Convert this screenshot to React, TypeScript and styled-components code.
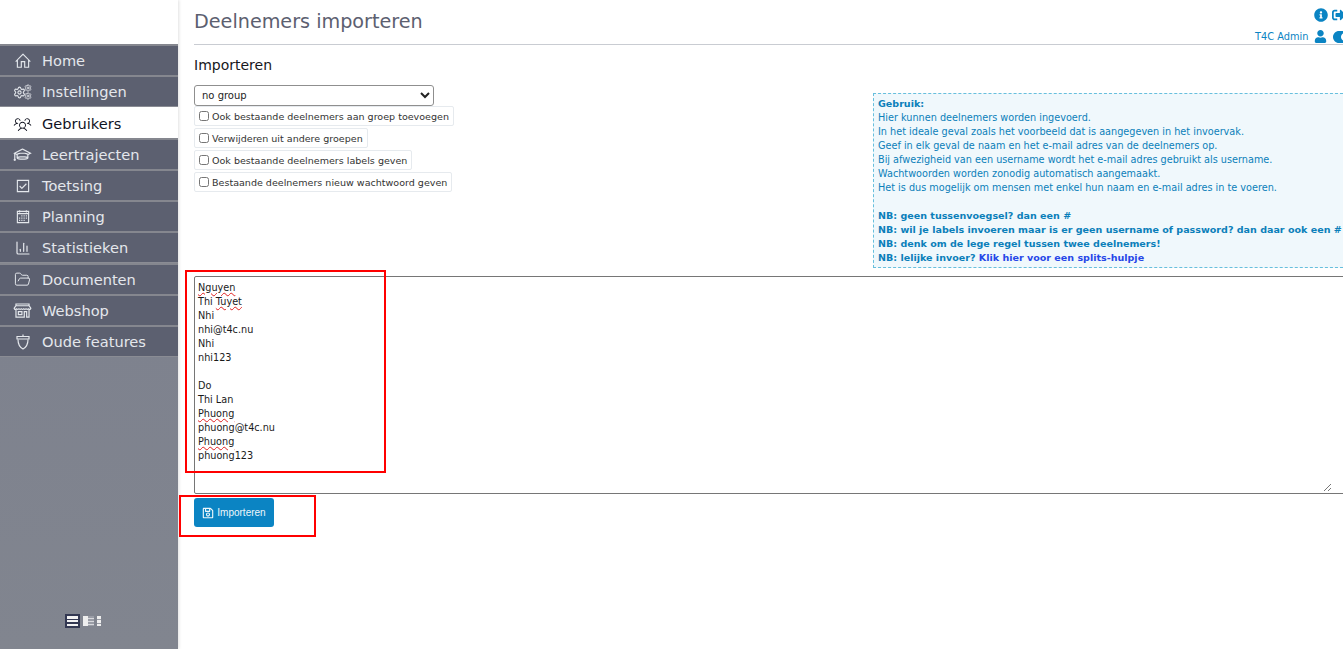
import React from "react";
import styled, { createGlobalStyle } from "styled-components";
import { FaInfoCircle, FaSignOutAlt, FaUser, FaToggleOn, FaRegSave } from "react-icons/fa";
import { LiaHomeSolid, LiaGraduationCapSolid, LiaCheckSquare, LiaCalendarAlt, LiaStoreAltSolid } from "react-icons/lia";
import { PiUsersThreeLight } from "react-icons/pi";
import { Settings, FolderOpen, ChartColumn } from "lucide-react";

const Global = createGlobalStyle`
  html, body { margin: 0; padding: 0; height: 100%; overflow: hidden; background: #fff; }
  body { font-family: "DejaVu Sans", Verdana, sans-serif; }
  #root { height: 100%; }
`;

const Page = styled.div`
  display: flex;
  width: 1343px;
  height: 649px;
  overflow: hidden;
`;

const Sidebar = styled.aside`
  width: 178px;
  flex: none;
  display: flex;
  flex-direction: column;
  padding-top: 44px;
  background: #fff;
  box-shadow: 1px 0 3px rgba(0,0,0,.12);
`;

const Menu = styled.nav`
  flex: 1;
  display: flex;
  flex-direction: column;
  background: linear-gradient(#7b7f8d, #81858f);
  position: relative;
`;

const Group = styled.div`
  border-bottom: 1px solid #8a8c94;
`;

const Item = styled.div<{ $active?: boolean }>`
  height: 31px;
  box-sizing: border-box;
  display: flex;
  align-items: center;
  border-top: 2px solid ${p => (p.$active ? "#fff" : "#85878f")};
  background: ${p => (p.$active ? "#fff" : "#5c6070")};
  color: ${p => (p.$active ? "#10131f" : "#e4e7ec")};
  font-size: 14.6px;
  padding-left: 13px;
  gap: 10px;
`;

const IconSlot = styled.span`
  width: 19px;
  height: 19px;
  display: flex;
  align-items: center;
  justify-content: center;
  flex: none;
`;

const ViewSwitch = styled.div`
  position: absolute;
  left: 65px;
  top: 570px;
  display: flex;
  align-items: center;
  gap: 3px;
`;

const Main = styled.main`
  flex: 1;
  min-width: 0;
  display: flex;
  flex-direction: column;
  padding-left: 16px;
`;

const Header = styled.header`
  height: 44px;
  border-bottom: 1px solid #c9ccd2;
  display: flex;
  justify-content: space-between;
`;

const Title = styled.h1`
  margin: 8px 0 0;
  font-size: 19.2px;
  font-weight: 400;
  line-height: 27px;
  color: #5c6070;
`;

const UserBox = styled.div`
  width: 100px;
  display: flex;
  flex-direction: column;
  padding-top: 8px;
  margin-right: -12px;
  color: #0b84c3;
`;

const IconRow = styled.div`
  display: flex;
  align-items: center;
  height: 15px;
  gap: 4px;
  padding-left: 59px;
`;

const UserRow = styled.div`
  display: flex;
  align-items: center;
  margin-top: 7px;
  font-size: 9.8px;
  white-space: nowrap;
  height: 15px;
  gap: 6px;
`;

const Heading = styled.h2`
  margin: 11px 0 0;
  font-size: 14px;
  line-height: 18px;
  font-weight: 400;
  color: #17181c;
`;

const FormTop = styled.div`
  display: flex;
  justify-content: space-between;
  align-items: flex-start;
  margin-top: 2px;
`;

const Options = styled.div`
  display: flex;
  flex-direction: column;
  align-items: flex-start;
  padding-top: 9px;
`;

const Select = styled.select`
  width: 240px;
  height: 21px;
  box-sizing: border-box;
  font: 10px "DejaVu Sans", sans-serif;
  color: #222;
  background: #fff;
  border: 1px solid #8f8f8f;
  border-radius: 3px;
  padding: 0 3px;
`;

const Check = styled.label`
  display: flex;
  align-items: center;
  height: 20px;
  margin-bottom: 2px;
  padding: 0 4px 0 3px;
  box-sizing: border-box;
  border: 1px solid #e6eaee;
  border-radius: 2px;
  font-size: 9.55px;
  color: #333;
  white-space: nowrap;
  input { width: 10px; height: 10px; margin: 0 3px 0 1px; }
`;

const Help = styled.div`
  width: 470px;
  box-sizing: border-box;
  height: 175px;
  margin-top: 17px;
  padding: 3px 0 0 4px;
  background: #f0f8fc;
  border: 1px dashed #67bfdd;
  border-right: 0;
  font-size: 9.7px;
  line-height: 14px;
  color: #0b7fba;
  white-space: nowrap;
  b { font-weight: 700; font-size: 9.56px; }
  a { color: #2747e8; font-weight: 700; text-decoration: none; }
`;

const EditorWrap = styled.div`
  position: relative;
  margin-top: 8px;
`;

const Editor = styled.div`
  width: 1160px;
  height: 218px;
  box-sizing: border-box;
  padding: 4px 3px;
  border: 1px solid #767676;
  border-radius: 2px;
  font-size: 9.7px;
  line-height: 14px;
  color: #1a1a1a;
  white-space: pre;
`;

const Miss = styled.span`
  text-decoration: underline wavy #e02020 1px;
  text-underline-offset: 1px;
`;

const Grip = styled.svg`
  position: absolute;
  right: 11px;
  bottom: 2px;
`;

const Mark = styled.div<{ $w: number; $h: number; $l: number; $t: number }>`
  position: absolute;
  left: ${p => p.$l}px;
  top: ${p => p.$t}px;
  width: ${p => p.$w}px;
  height: ${p => p.$h}px;
  box-sizing: border-box;
  border: 2px solid #f00;
  pointer-events: none;
`;

const Button = styled.button`
  align-self: flex-start;
  margin-top: 4px;
  width: 80px;
  height: 29px;
  display: flex;
  align-items: center;
  justify-content: center;
  gap: 3px;
  border: 0;
  border-radius: 3px;
  background: #0b84c3;
  color: #eef7fb;
  font: 10px "Liberation Sans", Arial, sans-serif;
  padding: 0;
`;

const Bar = styled.span`
  display: block;
  height: 2.5px;
  background: #f3f3f3;
`;

const ViewA = styled.span`
  width: 15px;
  height: 14px;
  box-sizing: border-box;
  padding: 2px;
  background: #333852;
  display: flex;
  flex-direction: column;
  justify-content: space-between;
`;

const ViewB = styled.span`
  width: 11px;
  height: 10px;
  background:
    linear-gradient(90deg, #eee 0 45%, transparent 45%),
    repeating-linear-gradient(#9a9da6 0 2px, #d8d9dd 2px 3px);
`;

const ViewC = styled.span`
  width: 4px;
  height: 10px;
  background: repeating-linear-gradient(#eee 0 3px, #9a9da6 3px 4px);
`;

const CogsIcon = () => (
  <svg width="19" height="16" viewBox="0 0 19 16">
    <Settings size={13} x={0} y={2} strokeWidth={2} />
    <Settings size={8} x={11} y={0} strokeWidth={2.4} />
    <Settings size={8} x={11} y={8} strokeWidth={2.4} />
  </svg>
);

const AcornIcon = () => (
  <svg width="14" height="16" viewBox="0 0 14 16" fill="none" stroke="currentColor" strokeWidth="1.2">
    <path d="M1 2.5h12v2.5H1z" />
    <path d="M7 .5v2" />
    <path d="M2 5.5c0 5 1.8 7.8 5 9.5 3.2-1.7 5-4.5 5-9.5" />
  </svg>
);

const top = [
  { t: "Home", i: <LiaHomeSolid size={18} /> },
  { t: "Instellingen", i: <CogsIcon /> },
];
const mid = [
  { t: "Gebruikers", i: <PiUsersThreeLight size={20} />, a: true },
  { t: "Leertrajecten", i: <LiaGraduationCapSolid size={20} /> },
  { t: "Toetsing", i: <LiaCheckSquare size={18} /> },
  { t: "Planning", i: <LiaCalendarAlt size={18} /> },
  { t: "Statistieken", i: <ChartColumn size={16} strokeWidth={1.8} /> },
];
const bot = [
  { t: "Documenten", i: <FolderOpen size={17} strokeWidth={1.4} /> },
  { t: "Webshop", i: <LiaStoreAltSolid size={19} /> },
  { t: "Oude features", i: <AcornIcon /> },
];

const renderItems = (list: { t: string; i: React.ReactNode; a?: boolean }[]) =>
  list.map(m => (
    <Item key={m.t} $active={m.a}>
      <IconSlot>{m.i}</IconSlot>
      {m.t}
    </Item>
  ));

export default function App() {
  return (
    <Page>
      <Global />
      <Sidebar>
        <Menu>
          <Group>{renderItems(top)}</Group>
          <Group>{renderItems(mid)}</Group>
          <Group>{renderItems(bot)}</Group>
          <ViewSwitch>
            <ViewA><Bar /><Bar /><Bar /></ViewA>
            <ViewB />
            <ViewC />
          </ViewSwitch>
        </Menu>
      </Sidebar>
      <Main>
        <Header>
          <Title>Deelnemers importeren</Title>
          <UserBox>
            <IconRow>
              <FaInfoCircle size={14} />
              <FaSignOutAlt size={14} />
            </IconRow>
            <UserRow>
              T4C Admin
              <FaUser size={13} />
              <FaToggleOn size={18} />
            </UserRow>
          </UserBox>
        </Header>
        <Heading>Importeren</Heading>
        <FormTop>
          <Options>
            <Select defaultValue="no group">
              <option>no group</option>
            </Select>
            <Check><input type="checkbox" />Ook bestaande deelnemers aan groep toevoegen</Check>
            <Check><input type="checkbox" />Verwijderen uit andere groepen</Check>
            <Check><input type="checkbox" />Ook bestaande deelnemers labels geven</Check>
            <Check><input type="checkbox" />Bestaande deelnemers nieuw wachtwoord geven</Check>
          </Options>
          <Help>
            <b>Gebruik:</b><br />
            Hier kunnen deelnemers worden ingevoerd.<br />
            In het ideale geval zoals het voorbeeld dat is aangegeven in het invoervak.<br />
            Geef in elk geval de naam en het e-mail adres van de deelnemers op.<br />
            Bij afwezigheid van een username wordt het e-mail adres gebruikt als username.<br />
            Wachtwoorden worden zonodig automatisch aangemaakt.<br />
            Het is dus mogelijk om mensen met enkel hun naam en e-mail adres in te voeren.<br />
            <br />
            <b>NB: geen tussenvoegsel? dan een #</b><br />
            <b>NB: wil je labels invoeren maar is er geen username of password? dan daar ook een #</b><br />
            <b>NB: denk om de lege regel tussen twee deelnemers!</b><br />
            <b>NB: lelijke invoer? <a>Klik hier voor een splits-hulpje</a></b>
          </Help>
        </FormTop>
        <EditorWrap>
          <Editor>
            <Miss>Nguyen</Miss>{"\n"}Thi <Miss>Tuyet</Miss>{"\n"}Nhi{"\n"}nhi@t4c.nu{"\n"}Nhi{"\n"}nhi123{"\n\n"}Do{"\n"}Thi Lan{"\n"}<Miss>Phuong</Miss>{"\n"}phuong@t4c.nu{"\n"}<Miss>Phuong</Miss>{"\n"}phuong123
          </Editor>
          <Grip width="9" height="9" viewBox="0 0 9 9" stroke="#777" strokeWidth="1"><path d="M1 8l7-7M5 8l3-3" /></Grip>
          <Mark $l={-9} $t={-6} $w={201} $h={203} />
          <Mark $l={-15} $t={219} $w={137} $h={42} />
        </EditorWrap>
        <Button><FaRegSave size={12} />Importeren</Button>
      </Main>
    </Page>
  );
}
